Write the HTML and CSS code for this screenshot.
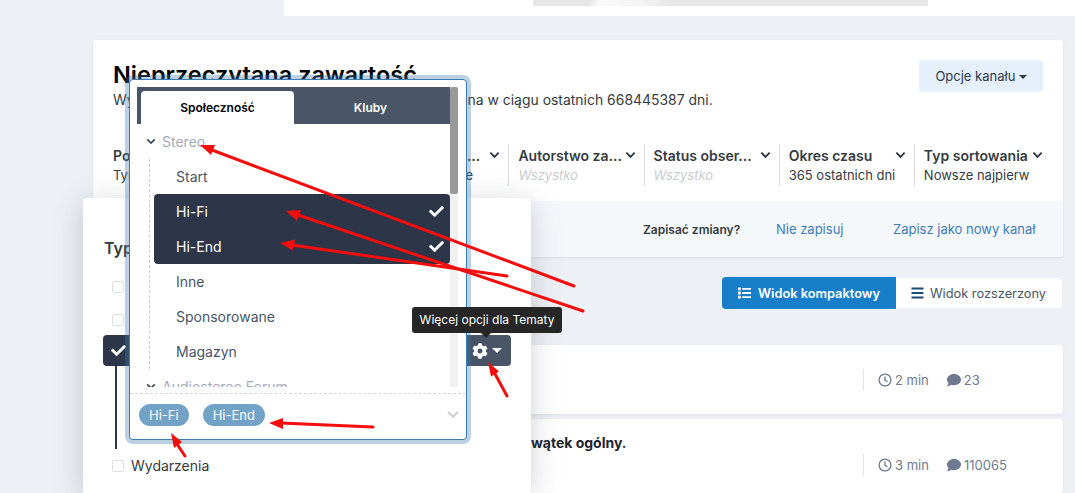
FILE: index.html
```html
<!DOCTYPE html>
<html lang="pl">
<head>
    <meta charset="UTF-8">
    <meta name="viewport" content="width=device-width, initial-scale=1.0">
    <title>Nieprzeczytana zawartość</title>
    <link rel="stylesheet" href="styles.css">
</head>
<body>
    <svg class="icon-defs" width="0" height="0">
        <symbol id="i-check" viewBox="0 0 512 512"><path d="M173.898 439.404l-166.4-166.4c-9.997-9.997-9.997-26.206 0-36.204l36.203-36.204c9.997-9.998 26.207-9.998 36.204 0L192 312.69 432.095 72.596c9.997-9.997 26.207-9.997 36.204 0l36.203 36.204c9.997 9.997 9.997 26.206 0 36.204l-294.4 294.401c-9.998 9.997-26.207 9.997-36.204-.001z"/></symbol>
        <symbol id="i-gear" viewBox="0 0 512 512"><path d="M487.4 315.7l-42.6-24.6c4.3-23.2 4.3-47 0-70.2l42.6-24.6c4.9-2.8 7.1-8.6 5.5-14-11.1-35.6-30-67.8-54.7-94.6-3.8-4.1-10-5.1-14.8-2.3L380.8 110c-17.9-15.4-38.5-27.3-60.8-35.1V25.8c0-5.6-3.9-10.5-9.4-11.7-36.7-8.2-74.3-7.8-109.2 0-5.5 1.2-9.4 6.1-9.4 11.7V75c-22.2 7.9-42.8 19.8-60.8 35.1L88.7 85.5c-4.9-2.8-11-1.9-14.8 2.3-24.7 26.7-43.6 58.9-54.7 94.6-1.7 5.4.6 11.2 5.5 14L67.3 221c-4.3 23.2-4.3 47 0 70.2l-42.6 24.6c-4.9 2.8-7.1 8.6-5.5 14 11.1 35.6 30 67.8 54.7 94.6 3.8 4.1 10 5.1 14.8 2.3l42.6-24.6c17.9 15.4 38.5 27.3 60.8 35.1v49.2c0 5.6 3.9 10.5 9.4 11.7 36.7 8.2 74.3 7.8 109.2 0 5.5-1.2 9.4-6.1 9.4-11.7v-49.2c22.2-7.9 42.8-19.8 60.8-35.1l42.6 24.6c4.9 2.8 11 1.9 14.8-2.3 24.7-26.7 43.6-58.9 54.7-94.6 1.5-5.5-.7-11.3-5.6-14.1zM256 336c-44.1 0-80-35.9-80-80s35.9-80 80-80 80 35.9 80 80-35.9 80-80 80z"/></symbol>
        <symbol id="i-comment" viewBox="0 0 512 512"><path d="M256 32C114.6 32 0 125.1 0 240c0 49.6 21.4 95 57 130.7C44.5 421.1 2.7 466 2.2 466.5c-2.2 2.3-2.8 5.7-1.5 8.7S4.8 480 8 480c66.3 0 116-31.8 140.6-51.4 32.7 12.3 69 19.4 107.4 19.4 141.4 0 256-93.1 256-208S397.4 32 256 32z"/></symbol>
        <symbol id="i-clock" viewBox="0 0 14 14"><circle cx="7" cy="7" r="5.9" fill="none" stroke="currentColor" stroke-width="1.3"/><path d="M7 3.4V7.3L9.5 8.8" fill="none" stroke="currentColor" stroke-width="1.3"/></symbol>
        <symbol id="i-chevron" viewBox="0 0 12 8"><path d="M1.5 1.5L6 6l4.5-4.5" fill="none" stroke="currentColor" stroke-width="2"/></symbol>
    </svg>

    <div class="top-strip"><div class="top-image"></div></div>

    <main class="content">
        <section class="feed-card">
            <div class="feed-head">
                <div>
                    <h1 class="feed-title">Nieprzeczytana zawartość</h1>
                    <p class="feed-desc">Wyświetlana jest zawartość, która została opublikowana w ciągu ostatnich 668445387 dni.</p>
                </div>
                <button class="feed-options">Opcje kanału <span class="caret"></span></button>
            </div>

            <div class="filters">
                <div class="filter">
                    <div class="filter-name"><b>Pokaż</b><svg class="chev"><use href="#i-chevron"/></svg></div>
                    <div class="filter-value">Tylko nieprzeczytane</div>
                </div>
                <div class="filter">
                    <div class="filter-name"><b>Typ zawartości</b><svg class="chev"><use href="#i-chevron"/></svg></div>
                    <div class="filter-value">Tematy</div>
                </div>
                <div class="filter">
                    <div class="filter-name"><b>Zawartość c...</b><svg class="chev"><use href="#i-chevron"/></svg></div>
                    <div class="filter-value">Tylko wybrane</div>
                </div>
                <div class="filter">
                    <div class="filter-name"><b>Autorstwo za...</b><svg class="chev"><use href="#i-chevron"/></svg></div>
                    <div class="filter-value muted">Wszystko</div>
                </div>
                <div class="filter">
                    <div class="filter-name"><b>Status obser...</b><svg class="chev"><use href="#i-chevron"/></svg></div>
                    <div class="filter-value muted">Wszystko</div>
                </div>
                <div class="filter">
                    <div class="filter-name"><b>Okres czasu</b><svg class="chev"><use href="#i-chevron"/></svg></div>
                    <div class="filter-value">365 ostatnich dni</div>
                </div>
                <div class="filter">
                    <div class="filter-name"><b>Typ sortowania</b><svg class="chev"><use href="#i-chevron"/></svg></div>
                    <div class="filter-value">Nowsze najpierw</div>
                </div>
            </div>

            <div class="save-bar">
                <strong>Zapisać zmiany?</strong>
                <a href="#">Nie zapisuj</a>
                <a href="#">Zapisz jako nowy kanał</a>
            </div>
        </section>

        <div class="view-switch">
            <button class="view-btn active">
                <svg class="view-icon" viewBox="0 0 14 12"><path d="M0 0h3v3H0zM0 4.500h3v3H0zM0 9h3v3H0zM4.500 .5H14v2H4.500zM4.500 5H14v2H4.500zM4.500 9.500H14v2H4.500z"/></svg>
                Widok kompaktowy
            </button>
            <button class="view-btn">
                <svg class="view-icon" viewBox="0 0 12 12"><path d="M0 .5h12v2H0zM0 5h12v2H0zM0 9.500h12v2H0z"/></svg>
                Widok rozszerzony
            </button>
        </div>

        <article class="topic-row">
            <div class="topic-meta">
                <span class="meta-item"><svg class="meta-icon"><use href="#i-clock"/></svg>2 min</span>
                <span class="meta-item"><svg class="meta-icon"><use href="#i-comment"/></svg>23</span>
            </div>
        </article>
        <article class="topic-row titled">
            <h2 class="topic-title">Audiostereo Forum - wątek ogólny.</h2>
            <div class="topic-meta">
                <span class="meta-item"><svg class="meta-icon"><use href="#i-clock"/></svg>3 min</span>
                <span class="meta-item"><svg class="meta-icon"><use href="#i-comment"/></svg>110065</span>
            </div>
        </article>
    </main>

    <!-- Filter menu -->
    <aside class="filter-menu">
        <h3 class="menu-title">Typ zawartości</h3>
        <label class="menu-row"><span class="box"></span>Tematy</label>
        <label class="menu-row"><span class="box"></span>Wpisy</label>
        <div class="menu-row selected">
            <span class="selected-check"><svg class="check-icon"><use href="#i-check"/></svg></span>
            <span class="selected-label">Fora</span>
            <span class="selected-tools">
                <svg class="gear-icon"><use href="#i-gear"/></svg>
                <span class="caret white"></span>
            </span>
        </div>
        <div class="menu-branch"></div>
        <label class="menu-row"><span class="box"></span>Wydarzenia</label>
        <label class="menu-row"><span class="box"></span></label>
    </aside>

    <!-- Forum picker -->
    <div class="picker">
        <div class="picker-scroll">
            <div class="picker-list">
                <div class="tabs">
                    <div class="tab active">Społeczność</div>
                    <div class="tab">Kluby</div>
                </div>
                <div class="tree-head"><svg class="tree-chev"><use href="#i-chevron"/></svg>Stereo</div>
                <ul class="tree">
                    <li>Start</li>
                    <li class="picked">Hi-Fi<svg class="check-icon"><use href="#i-check"/></svg></li>
                    <li class="picked">Hi-End<svg class="check-icon"><use href="#i-check"/></svg></li>
                    <li>Inne</li>
                    <li>Sponsorowane</li>
                    <li>Magazyn</li>
                </ul>
                <div class="tree-head"><svg class="tree-chev"><use href="#i-chevron"/></svg>Audiostereo Forum</div>
            </div>
            <div class="scrollbar"><div class="scroll-thumb"></div></div>
        </div>
        <div class="picker-foot">
            <span class="chip">Hi-Fi</span>
            <span class="chip">Hi-End</span>
            <svg class="foot-chev"><use href="#i-chevron"/></svg>
        </div>
    </div>

    <div class="tooltip">Więcej opcji dla Tematy</div>

    <!-- Hand drawn arrows on top of the screenshot -->
    <svg class="arrows" viewBox="0 0 1075 493">
        <g class="arrow-lines">
            <path d="M574 286L212 150"/>
            <path d="M583 311L298 215"/>
            <path d="M507 276L292 245"/>
            <path d="M507 396L494 372"/>
            <path d="M373 427L281 423"/>
            <path d="M185 456L177 444"/>
        </g>
        <g class="arrow-heads">
            <path d="M200 145L215 145L211 155z"/>
            <path d="M286 211L301 210L297 221z"/>
            <path d="M280 243L295 239.500L293 250.500z"/>
            <path d="M488 362L499 371.500L491 376.500z"/>
            <path d="M269 423L283 418L283 429z"/>
            <path d="M171 433L182 442L174 448z"/>
        </g>
    </svg>
</body>
</html>
```

FILE: styles.css
```css
/* Basic styling */
* {
    box-sizing: border-box;
}
html, body {
    height: 493px;
}
body {
    margin: 0;
    overflow: hidden;
    position: relative;
    background-color: #edf0f4;
    color: #353c41;
    font-family: 'Inter', 'Liberation Sans', sans-serif;
    font-size: 13px;
}
button {
    font-family: inherit;
    border: none;
    cursor: pointer;
}
.icon-defs {
    position: absolute;
}
.caret {
    display: inline-block;
    width: 0;
    height: 0;
    border-left: 4px solid transparent;
    border-right: 4px solid transparent;
    border-top: 4px solid #2f3a4f;
    vertical-align: 2px;
}
.caret.white {
    border-left-width: 5px;
    border-right-width: 5px;
    border-top: 5px solid #ffffff;
}

/* Top strip */
.top-strip {
    height: 16px;
    margin-left: 284px;
    padding-left: 249px;
    background-color: #ffffff;
}
.top-image {
    width: 395px;
    height: 6px;
    background: linear-gradient(100deg, #e6e6e6 14%, #fafafa 17%, #f4f4f4 28%, #e6e6e6 35%);
}

/* Main column */
.content {
    margin: 24px 12px 0 93px;
}
.feed-card {
    height: 217px;
    background-color: #ffffff;
    border-radius: 4px;
    overflow: hidden;
    box-shadow: 0 1px 3px rgba(40, 50, 70, 0.08);
}
.feed-head {
    display: flex;
    justify-content: space-between;
    height: 104px;
    padding: 20px 20px 0;
}
.feed-title {
    margin: 0;
    color: #000000;
    font-size: 23.500px;
    line-height: 29px;
    font-weight: 600;
}
.feed-desc {
    margin: 1px 0 0;
    font-size: 13.950px;
    line-height: 20px;
    color: #353c41;
}
.feed-options {
    height: 32px;
    padding: 0 16px;
    border-radius: 4px;
    background-color: #e5f0fa;
    color: #2f3a4f;
    font-size: 13px;
}
.filters {
    display: flex;
    height: 42px;
    padding-left: 10px;
}
.filter {
    width: 135.150px;
    padding: 0 8px 0 9px;
    border-left: 1px solid #d8dbe0;
}
.filter:first-child {
    border-left: none;
    padding-left: 10px;
}
.filter:last-child {
    width: 129px;
    padding-right: 0;
}
.filter-name {
    display: flex;
    justify-content: space-between;
    align-items: center;
    height: 22px;
    font-size: 14px;
    color: #353c41;
}
.filter-name b {
    font-weight: 600;
    white-space: nowrap;
}
.chev {
    flex: none;
    width: 11px;
    height: 8px;
    color: #2c3545;
}
.filter-value {
    font-size: 13px;
    line-height: 18px;
    white-space: nowrap;
}
.filter-value.muted {
    color: #c9ccd1;
    font-style: italic;
}
.save-bar {
    display: flex;
    align-items: center;
    height: 56px;
    margin-top: 15px;
    padding-left: 550px;
    background-color: #f5f8fb;
    font-size: 13px;
}
.save-bar strong {
    font-size: 12px;
    font-weight: 600;
    width: 133px;
}
.save-bar a {
    color: #3d7dbd;
    text-decoration: none;
}
.save-bar a:first-of-type {
    width: 117px;
}

/* View switch */
.view-switch {
    display: flex;
    justify-content: flex-end;
    margin: 20px 1px 36px 0;
}
.view-btn {
    display: flex;
    align-items: center;
    gap: 6px;
    height: 30px;
    margin-top: 1px;
    padding: 0 15px;
    width: 166px;
    background-color: #ffffff;
    color: #4a5568;
    font-size: 12.800px;
    white-space: nowrap;
    border-radius: 0 4px 4px 0;
}
.view-btn.active {
    gap: 7px;
    width: 174px;
    height: 32px;
    margin-top: 0;
    padding: 0 16px;
    background-color: #177ec9;
    color: #ffffff;
    font-weight: 600;
    border-radius: 4px 0 0 4px;
}
.view-icon {
    flex: none;
    width: 13px;
    height: 12px;
    fill: #1d4a73;
}
.active .view-icon {
    fill: #ffffff;
}

/* Topic rows */
.topic-row {
    height: 69px;
    margin-bottom: 5px;
    padding: 24px 20px 0;
    background-color: #ffffff;
    border-radius: 4px;
    box-shadow: 0 1px 3px rgba(40, 50, 70, 0.08);
}
.topic-row.titled {
    height: 74px;
    margin-bottom: 0;
    padding-top: 15px;
}
.topic-title {
    height: 20px;
    margin: 0;
    padding-left: 274px;
    font-size: 14px;
    line-height: 18px;
    font-weight: 700;
    color: #1d2430;
}
.topic-meta {
    display: flex;
    gap: 18px;
    height: 21px;
    margin-left: 750px;
    padding-left: 14px;
    border-left: 1px solid #e0e3e7;
    align-items: center;
    color: #6d7a92;
    font-size: 13px;
}
.meta-item {
    display: flex;
    align-items: center;
    gap: 3px;
}
.meta-icon {
    width: 14px;
    height: 14px;
    fill: currentColor;
}

/* Filter menu */
.filter-menu {
    position: absolute;
    left: 83px;
    top: 198px;
    width: 448px;
    height: 295px;
    overflow: hidden;
    padding: 40px 20px 0 29px;
    background-color: #ffffff;
    border-radius: 4px 4px 0 0;
    box-shadow: 0 5px 30px rgba(40, 50, 70, 0.22);
}
.menu-title {
    margin: 0 0 12px -8px;
    font-size: 16px;
    line-height: 20px;
    font-weight: 600;
}
.menu-row {
    display: flex;
    align-items: center;
    height: 33px;
    gap: 7px;
    font-size: 14px;
}
.box {
    flex: none;
    width: 12px;
    height: 12px;
    border: 1px solid #dcdee2;
    border-radius: 2px;
}
.menu-row.selected {
    height: 31px;
    margin-left: -9px;
    margin-top: -1px;
    border-radius: 4px;
    color: #ffffff;
    gap: 0;
    background: linear-gradient(90deg, #2d3648, #4a5568);
}
.selected-check {
    display: flex;
    justify-content: center;
    width: 31px;
}
.selected-label {
    flex: 1;
}
.selected-tools {
    display: flex;
    align-items: center;
    gap: 4px;
    padding-right: 9px;
}
.check-icon {
    width: 15px;
    height: 15px;
    fill: #ffffff;
}
.gear-icon {
    width: 16px;
    height: 16px;
    fill: #ffffff;
}
.menu-branch {
    width: 2px;
    height: 83px;
    margin-left: 3px;
    background-color: #2d3648;
}

/* Forum picker */
.picker {
    position: absolute;
    left: 129px;
    top: 79px;
    width: 338px;
    height: 361px;
    background-color: #ffffff;
    border: 1px solid #3c7cb0;
    border-radius: 4px;
    box-shadow: 0 0 0 4px rgba(60, 124, 176, 0.35);
}
.picker-scroll {
    display: flex;
    height: 307px;
    padding: 7px 7px 0;
}
.picker-list {
    width: 313px;
    overflow: hidden;
}
.scrollbar {
    width: 8px;
    background-color: #f1f1f1;
}
.scroll-thumb {
    height: 107px;
    background-color: #999999;
    border-radius: 2px;
}
.tabs {
    display: flex;
    align-items: flex-end;
    height: 37px;
    padding-left: 4px;
    background-color: #4a5568;
}
.tab {
    width: 153px;
    height: 33px;
    line-height: 33px;
    text-align: center;
    color: #ffffff;
    font-size: 12px;
    font-weight: 600;
}
.tab.active {
    background-color: #ffffff;
    color: #000000;
    border-radius: 4px 4px 0 0;
}
.tree-head {
    display: flex;
    align-items: center;
    gap: 6px;
    height: 35px;
    padding-left: 9px;
    color: #a5a9bb;
    font-size: 14px;
}
.tree-chev {
    width: 10px;
    height: 7px;
    color: #3b4558;
}
.tree {
    list-style: none;
    margin: 0;
    padding: 0 0 0 17px;
    position: relative;
}
.tree::before {
    content: "";
    position: absolute;
    left: 12px;
    top: 0;
    bottom: 0;
    border-left: 1px dashed #c9ccd1;
}
.tree li {
    display: flex;
    align-items: center;
    justify-content: space-between;
    height: 35px;
    padding: 0 6px 0 22px;
    font-size: 14px;
    color: #4a5568;
}
.tree li.picked {
    background-color: #2d3648;
    color: #ffffff;
}
.tree li.picked:nth-child(2) {
    border-radius: 4px 4px 0 0;
}
.tree li.picked:nth-child(3) {
    border-radius: 0 0 4px 4px;
}
.picker-foot {
    display: flex;
    align-items: center;
    gap: 14px;
    height: 46px;
    margin-top: 6px;
    padding: 0 9px 4px;
    border-top: 1px dashed #d5d7db;
}
.chip {
    height: 22px;
    line-height: 22px;
    padding: 0 10px;
    border-radius: 11px;
    background-color: #72a2c6;
    color: #ffffff;
    font-size: 13px;
}
.foot-chev {
    width: 14px;
    height: 9px;
    margin-left: auto;
    margin-right: -3px;
    color: #cfd1d5;
}

/* Tooltip */
.tooltip {
    position: absolute;
    left: 412px;
    top: 307px;
    width: 150px;
    height: 26px;
    line-height: 26px;
    text-align: center;
    background-color: #262626;
    color: #ffffff;
    font-size: 12px;
    border-radius: 3px;
}
.tooltip::after {
    content: "";
    position: absolute;
    left: 69px;
    top: 26px;
    border-left: 5px solid transparent;
    border-right: 5px solid transparent;
    border-top: 5px solid #262626;
}

/* Arrows */
.arrows {
    position: absolute;
    left: 0;
    top: 0;
    width: 1075px;
    height: 493px;
    pointer-events: none;
}
.arrow-lines path {
    fill: none;
    stroke: #f40d0d;
    stroke-width: 3;
    stroke-linecap: round;
}
.arrow-heads path {
    fill: #f40d0d;
}
```
